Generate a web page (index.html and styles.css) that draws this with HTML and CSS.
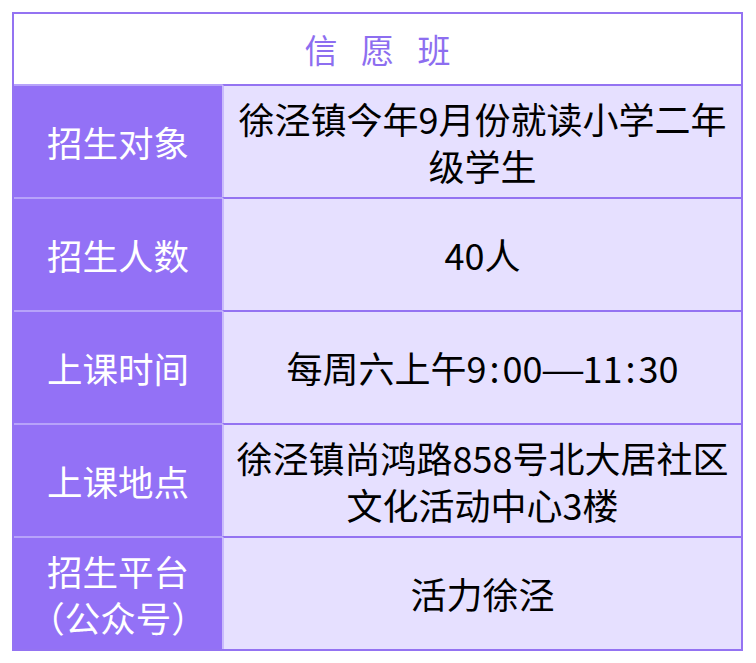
FILE: index.html
```html
<!DOCTYPE html>
<html lang="zh">
<head>
<meta charset="utf-8">
<link rel="stylesheet" href="styles.css">
</head>
<body>
<div class="table">
  <div class="title">信 愿 班</div>
  <div class="row">
    <div class="label">招生对象</div>
    <div class="value">徐泾镇今年9月份就读小学二年级学生</div>
  </div>
  <div class="row">
    <div class="label">招生人数</div>
    <div class="value">40人</div>
  </div>
  <div class="row">
    <div class="label">上课时间</div>
    <div class="value">每周六上午9<span class="colon">:</span>00<span class="dash">—</span>11<span class="colon">:</span>30</div>
  </div>
  <div class="row">
    <div class="label">上课地点</div>
    <div class="value">徐泾镇尚鸿路858号北大居社区文化活动中心3楼</div>
  </div>
  <div class="row">
    <div class="label">招生平台<br>（公众号）</div>
    <div class="value">活力徐泾</div>
  </div>
</div>
</body>
</html>
```
FILE: styles.css
```css
html, body {
  margin: 0;
  padding: 0;
  background: #ffffff;
}
body {
  padding: 12px 0 0 12px;
  font-family: "Noto Sans CJK SC", "Noto Sans", sans-serif;
}
.table {
  width: 727px;
  border: 2px solid #9473f2;
  display: flex;
  flex-direction: column;
}
.title {
  height: 70px;
  display: flex;
  align-items: center;
  justify-content: center;
  font-size: 33px;
  color: #8d6ef0;
  letter-spacing: 7px;
  word-spacing: 2px;
  padding-left: 7px;
  background: #ffffff;
}
.row {
  display: grid;
  grid-template-columns: 208px 1fr;
  height: 113px;
}
.label {
  background: #9371f6;
  color: #ffffff;
  border-top: 2px solid #b7a3fa;
  display: flex;
  align-items: center;
  justify-content: center;
  text-align: center;
  font-size: 35.5px;
  line-height: 46px;
}
.value {
  background: #e6e0ff;
  color: #000000;
  border-top: 2px solid #9473f2;
  border-left: 2px solid #c9bbfb;
  display: flex;
  align-items: center;
  justify-content: center;
  text-align: center;
  font-size: 36px;
  line-height: 47px;
  padding: 0 8px;
}
.colon {
  margin: 0 3px;
}
.dash {
  display: inline-block;
  width: 40px;
  text-align: center;
  transform: scaleX(1.4);
}
.row:first-of-type .label {
  border-top-color: #9473f2;
}
```
